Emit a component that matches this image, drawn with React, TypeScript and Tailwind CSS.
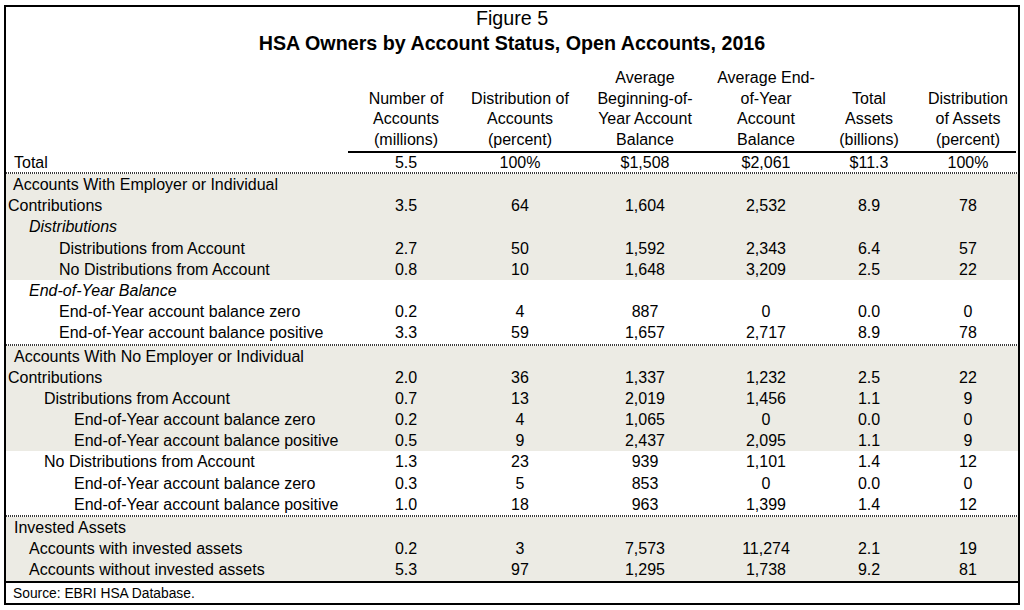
import React from 'react';

type Row = {
  label: string;
  indent: string;
  values?: string[];
  italic?: boolean;
};

type Section = {
  shaded: boolean;
  rows: Row[];
};

const columns = [
  ['Number of', 'Accounts', '(millions)'],
  ['Distribution of', 'Accounts', '(percent)'],
  ['Average', 'Beginning-of-', 'Year Account', 'Balance'],
  ['Average End-', 'of-Year', 'Account', 'Balance'],
  ['Total', 'Assets', '(billions)'],
  ['Distribution', 'of Assets', '(percent)'],
];

const totals = ['5.5', '100%', '$1,508', '$2,061', '$11.3', '100%'];

// groups are split on the dotted rules; each group holds shaded / white blocks
const groups: Section[][] = [
  [
    {
      shaded: true,
      rows: [
        { label: 'Accounts With Employer or Individual', indent: 'pl-[7px]' },
        { label: 'Contributions', indent: 'pl-[2px]', values: ['3.5', '64', '1,604', '2,532', '8.9', '78'] },
        { label: 'Distributions', indent: 'pl-[23px]', italic: true },
        { label: 'Distributions from Account', indent: 'pl-[53px]', values: ['2.7', '50', '1,592', '2,343', '6.4', '57'] },
        { label: 'No Distributions from Account', indent: 'pl-[53px]', values: ['0.8', '10', '1,648', '3,209', '2.5', '22'] },
      ],
    },
    {
      shaded: false,
      rows: [
        { label: 'End-of-Year Balance', indent: 'pl-[23px]', italic: true },
        { label: 'End-of-Year account balance zero', indent: 'pl-[53px]', values: ['0.2', '4', '887', '0', '0.0', '0'] },
        { label: 'End-of-Year account balance positive', indent: 'pl-[53px]', values: ['3.3', '59', '1,657', '2,717', '8.9', '78'] },
      ],
    },
  ],
  [
    {
      shaded: true,
      rows: [
        { label: 'Accounts With No Employer or Individual', indent: 'pl-[8px]' },
        { label: 'Contributions', indent: 'pl-[2px]', values: ['2.0', '36', '1,337', '1,232', '2.5', '22'] },
        { label: 'Distributions from Account', indent: 'pl-[38px]', values: ['0.7', '13', '2,019', '1,456', '1.1', '9'] },
        { label: 'End-of-Year account balance zero', indent: 'pl-[68px]', values: ['0.2', '4', '1,065', '0', '0.0', '0'] },
        { label: 'End-of-Year account balance positive', indent: 'pl-[68px]', values: ['0.5', '9', '2,437', '2,095', '1.1', '9'] },
      ],
    },
    {
      shaded: false,
      rows: [
        { label: 'No Distributions from Account', indent: 'pl-[38px]', values: ['1.3', '23', '939', '1,101', '1.4', '12'] },
        { label: 'End-of-Year account balance zero', indent: 'pl-[68px]', values: ['0.3', '5', '853', '0', '0.0', '0'] },
        { label: 'End-of-Year account balance positive', indent: 'pl-[68px]', values: ['1.0', '18', '963', '1,399', '1.4', '12'] },
      ],
    },
  ],
  [
    {
      shaded: true,
      rows: [
        { label: 'Invested Assets', indent: 'pl-[8px]' },
        { label: 'Accounts with invested assets', indent: 'pl-[23px]', values: ['0.2', '3', '7,573', '11,274', '2.1', '19'] },
        { label: 'Accounts without invested assets', indent: 'pl-[23px]', values: ['5.3', '97', '1,295', '1,738', '9.2', '81'] },
      ],
    },
  ],
];

const gridCols = 'grid grid-cols-[342px_116px_112px_138px_104px_102px_96px]';

const DottedRule = () => (
  <div className="h-[2px] w-full bg-[image:repeating-linear-gradient(90deg,#3a3a3a_0px,#3a3a3a_1px,transparent_1px,transparent_2px)]" />
);

const DataRow: React.FC<{ row: Row }> = ({ row }) => (
  <div className={`${gridCols} h-[21.2px] leading-[21.2px]`}>
    <div className={`${row.indent} whitespace-nowrap ${row.italic ? 'italic' : ''}`}>{row.label}</div>
    {(row.values ?? ['', '', '', '', '', '']).map((v, i) => (
      <div key={i} className="text-center">
        {v}
      </div>
    ))}
  </div>
);

export default function App() {
  return (
    <div
      className="min-h-[610px] w-[1024px] bg-white pl-[4px] pt-[5px] text-[16px] text-black"
      style={{ fontFamily: '"Liberation Sans", Arial, sans-serif' }}
    >
      <div className="w-[1016px] border-2 border-black">
        {/* Title */}
        <div className="text-center text-[19.7px] leading-[22px]">Figure 5</div>
        <div className="mt-[3px] text-center text-[19.7px] font-bold leading-[22px]">
          HSA Owners by Account Status, Open Accounts, 2016
        </div>

        {/* Column headers */}
        <div className={gridCols}>
          <div />
          {columns.map((lines, i) => (
            <div
              key={i}
              className="flex h-[99px] flex-col justify-end border-b-2 border-black pb-[1px] text-center leading-[20.4px]"
            >
              {lines.map((l) => (
                <div key={l}>{l}</div>
              ))}
            </div>
          ))}
        </div>

        {/* Total row */}
        <div className={`${gridCols} h-[19px] leading-[19px]`}>
          <div className="pl-[8px]">Total</div>
          {totals.map((v, i) => (
            <div key={i} className="text-center">
              {v}
            </div>
          ))}
        </div>

        {groups.map((group, gi) => (
          <div key={gi}>
            <DottedRule />
            {group.map((section, si) => (
              <div key={si} className={section.shaded ? 'bg-[#ecebe4]' : 'bg-white'}>
                {section.rows.map((row, ri) => (
                  <DataRow key={ri} row={row} />
                ))}
              </div>
            ))}
          </div>
        ))}

        {/* Source */}
        <div className="h-[22px] border-t-2 border-black pl-[7px] text-[13.8px] leading-[21px]">
          Source: EBRI HSA Database.
        </div>
      </div>
    </div>
  );
}
